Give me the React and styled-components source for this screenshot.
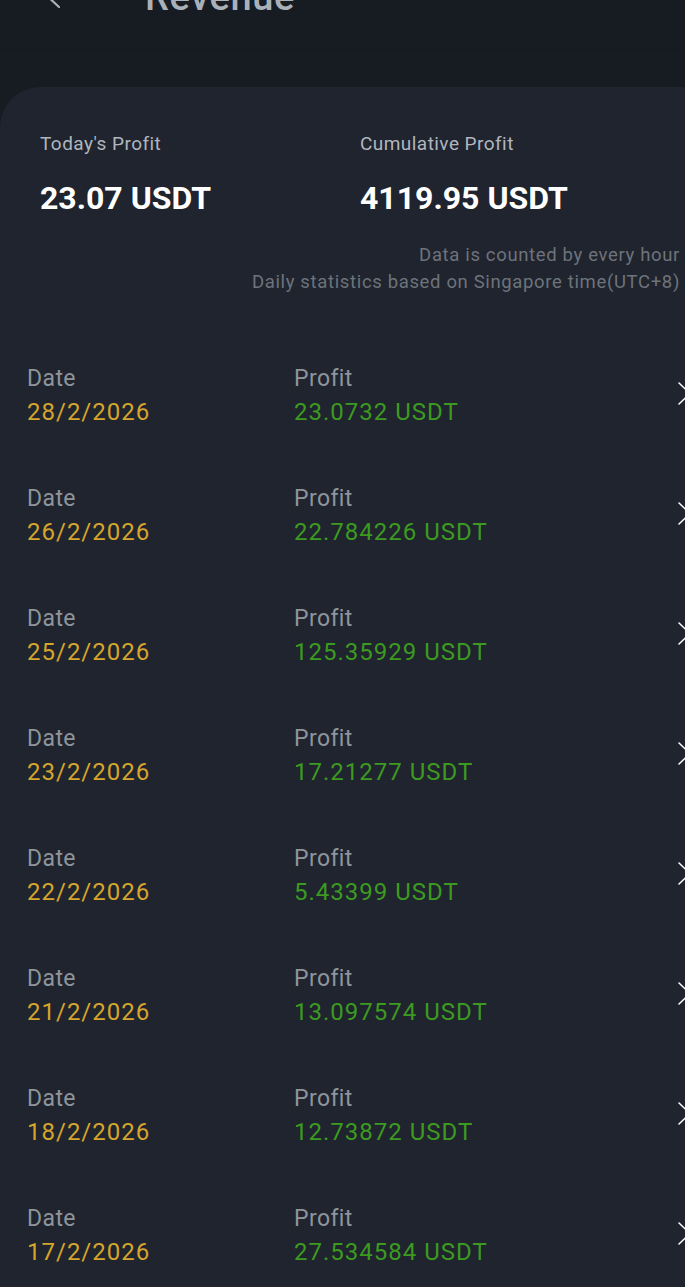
import React from "react";
import styled, { createGlobalStyle } from "styled-components";

const GlobalStyle = createGlobalStyle`
  html, body {
    margin: 0;
    padding: 0;
    background: #171c23;
    overflow: hidden;
  }
  body {
    font-family: Roboto, "Liberation Sans", sans-serif;
  }
`;

const Page = styled.div`
  width: 685px;
  height: 1287px;
  overflow: hidden;
  background: #171c23;
  display: flex;
  flex-direction: column;
`;

const TopBar = styled.div`
  height: 50px;
  flex-shrink: 0;
  display: flex;
  align-items: flex-start;
  border-bottom: 1px solid #141920;
  box-sizing: border-box;
`;

const BackButton = styled.div`
  width: 100px;
  margin-top: -20px;
  padding-left: 44px;
  box-sizing: border-box;
  display: flex;
`;

const Title = styled.h1`
  margin: -22px 0 0 45px;
  font-size: 38px;
  line-height: 38px;
  font-weight: 500;
  letter-spacing: 0.6px;
  color: #aab0b9;
`;

const Card = styled.div`
  margin-top: 37px;
  width: 720px;
  flex: 1;
  background: #1f242e;
  border-radius: 40px 40px 0 0;
  padding-top: 45px;
  box-sizing: border-box;
`;

const Summary = styled.div`
  display: flex;
  padding: 0 40px;
`;

const SummaryItem = styled.div`
  width: ${(p) => p.$w}px;
  display: flex;
  flex-direction: column;
`;

const SummaryLabel = styled.div`
  font-size: 19px;
  line-height: 23px;
  letter-spacing: 0.45px;
  color: #b1b6be;
`;

const SummaryValue = styled.div`
  margin-top: 24px;
  font-size: 32px;
  line-height: 38px;
  font-weight: 700;
  color: #ffffff;
`;

const Note = styled.div`
  margin-top: 25px;
  padding-right: 40px;
  text-align: right;
  font-size: 18.5px;
  line-height: 27px;
  letter-spacing: 0.65px;
  color: #6e737b;
`;

const List = styled.div`
  margin-top: 45px;
  display: flex;
  flex-direction: column;
`;

const Row = styled.div`
  height: 120px;
  display: flex;
  align-items: flex-start;
  padding: 21px 0 0 27px;
  box-sizing: border-box;
`;

const Cell = styled.div`
  width: ${(p) => p.$w}px;
  display: flex;
  flex-direction: column;
`;

const CellLabel = styled.div`
  font-size: 23px;
  line-height: 33px;
  letter-spacing: 0.4px;
  color: #8f949c;
`;

const CellValue = styled.div`
  font-size: 24px;
  line-height: 34px;
  letter-spacing: 1px;
  color: ${(p) => p.$color};
`;

const Chevron = styled.div`
  margin-top: 20px;
  display: flex;
`;

const rows = [
  ["28/2/2026", "23.0732"],
  ["26/2/2026", "22.784226"],
  ["25/2/2026", "125.35929"],
  ["23/2/2026", "17.21277"],
  ["22/2/2026", "5.43399"],
  ["21/2/2026", "13.097574"],
  ["18/2/2026", "12.73872"],
  ["17/2/2026", "27.534584"],
];

const ChevronIcon = ({ color, left, width = 14, height = 24, stroke = 1.6 }) => (
  <svg width={width} height={height} viewBox={`0 0 ${width} ${height}`} fill="none">
    <path
      d={
        left
          ? `M${width - 1} 1 L1 ${height / 2} L${width - 1} ${height - 1}`
          : `M1 1 L${width - 1} ${height / 2} L1 ${height - 1}`
      }
      stroke={color}
      strokeWidth={stroke}
      strokeLinecap="round"
      strokeLinejoin="round"
    />
  </svg>
);

export default function App() {
  return (
    <>
      <GlobalStyle />
      <Page>
        <TopBar>
          <BackButton>
            <ChevronIcon color="#aab0b9" left width={16} height={28} stroke={2.2} />
          </BackButton>
          <Title>Revenue</Title>
        </TopBar>
        <Card>
          <Summary>
            <SummaryItem $w={320}>
              <SummaryLabel>Today's Profit</SummaryLabel>
              <SummaryValue>23.07 USDT</SummaryValue>
            </SummaryItem>
            <SummaryItem $w={300}>
              <SummaryLabel>Cumulative Profit</SummaryLabel>
              <SummaryValue>4119.95 USDT</SummaryValue>
            </SummaryItem>
          </Summary>
          <Note>
            Data is counted by every hour
            <br />
            Daily statistics based on Singapore time(UTC+8)
          </Note>
          <List>
            {rows.map(([date, profit]) => (
              <Row key={date}>
                <Cell $w={267}>
                  <CellLabel>Date</CellLabel>
                  <CellValue $color="#d6a52b">{date}</CellValue>
                </Cell>
                <Cell $w={384}>
                  <CellLabel>Profit</CellLabel>
                  <CellValue $color="#3d9a20">{profit} USDT</CellValue>
                </Cell>
                <Chevron>
                  <ChevronIcon color="#ffffff" width={13} height={23} stroke={1.5} />
                </Chevron>
              </Row>
            ))}
          </List>
        </Card>
      </Page>
    </>
  );
}
